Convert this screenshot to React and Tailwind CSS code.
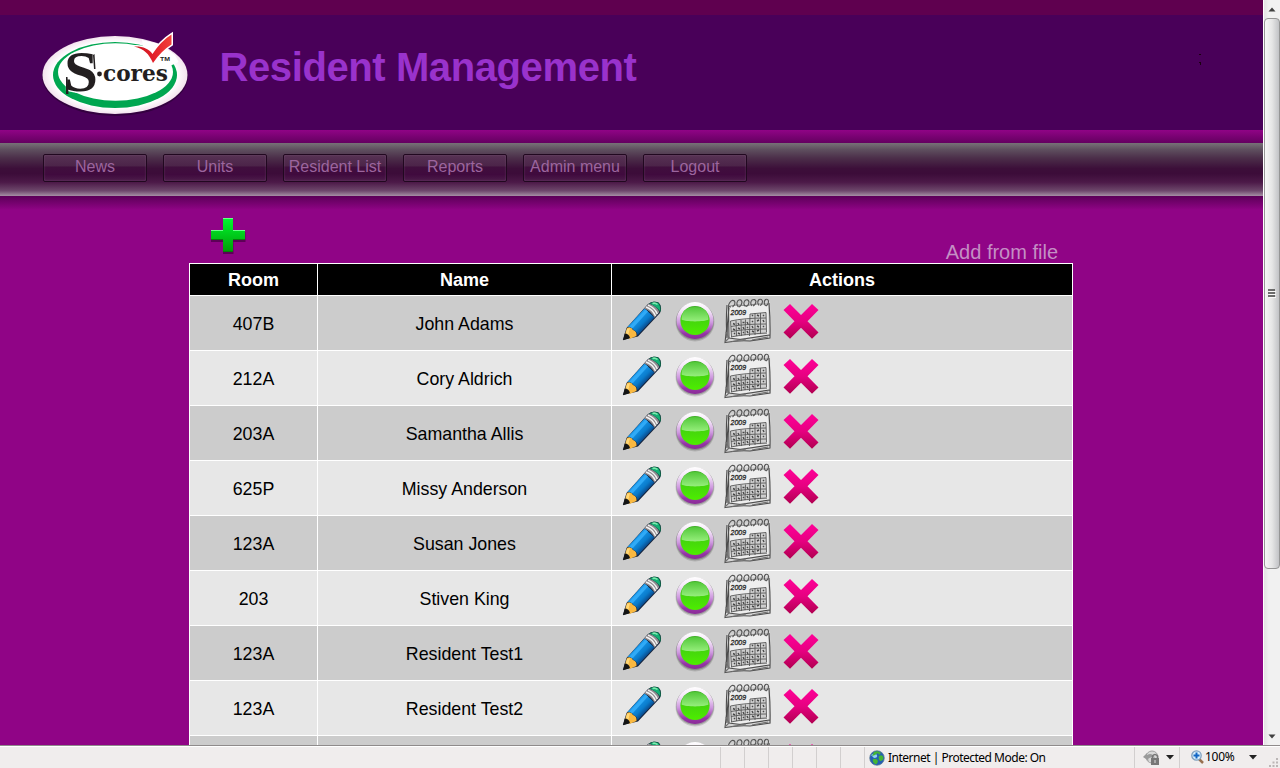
import React from "react";

const residents = [
  ["407B", "John Adams"],
  ["212A", "Cory Aldrich"],
  ["203A", "Samantha Allis"],
  ["625P", "Missy Anderson"],
  ["123A", "Susan Jones"],
  ["203", "Stiven King"],
  ["123A", "Resident Test1"],
  ["123A", "Resident Test2"],
  ["", ""],
];

const menu = ["News", "Units", "Resident List", "Reports", "Admin menu", "Logout"];

function Defs() {
  return (
    <svg width="0" height="0" className="absolute">
      <defs>
        <linearGradient id="pencilBlue" x1="0" y1="0" x2="1" y2="1">
          <stop offset="0.3" stopColor="#1b9cf0" />
          <stop offset="0.55" stopColor="#0a7ccc" />
          <stop offset="0.72" stopColor="#0a3a78" />
        </linearGradient>
        <linearGradient id="ring" x1="0" y1="0" x2="0" y2="1">
          <stop offset="0" stopColor="#ffffff" />
          <stop offset="0.25" stopColor="#f4e6f8" />
          <stop offset="0.55" stopColor="#cf9ae0" />
          <stop offset="0.85" stopColor="#9636a6" />
          <stop offset="1" stopColor="#8a2a98" />
        </linearGradient>
        <linearGradient id="ballGreen" x1="0" y1="0" x2="0" y2="1">
          <stop offset="0" stopColor="#3fae28" />
          <stop offset="0.5" stopColor="#44d60c" />
          <stop offset="1" stopColor="#4dee00" />
        </linearGradient>
        <linearGradient id="gloss" x1="0" y1="0" x2="0" y2="1">
          <stop offset="0" stopColor="#52c83a" />
          <stop offset="1" stopColor="#96ee7c" />
        </linearGradient>
        <linearGradient id="crossPink" x1="0" y1="0" x2="0" y2="1">
          <stop offset="0" stopColor="#ff0098" />
          <stop offset="0.5" stopColor="#e60080" />
          <stop offset="1" stopColor="#b00050" />
        </linearGradient>
        <linearGradient id="plusGreen" x1="0" y1="0" x2="0" y2="1">
          <stop offset="0" stopColor="#00fa30" />
          <stop offset="1" stopColor="#009c06" />
        </linearGradient>
        <linearGradient id="checkRed" x1="0" y1="0" x2="1" y2="0">
          <stop offset="0" stopColor="#c8141c" />
          <stop offset="0.5" stopColor="#e2202a" />
          <stop offset="1" stopColor="#f24038" />
        </linearGradient>
        <radialGradient id="badge">
          <stop offset="0.85" stopColor="#ffffff" />
          <stop offset="1" stopColor="#f3e3ee" />
        </radialGradient>
      </defs>
    </svg>
  );
}

function Logo() {
  return (
    <svg width="160" height="100" viewBox="36 24 160 100" className="shrink-0">
      <ellipse cx="115" cy="76.500" rx="73" ry="39.500" fill="#22002c" opacity="0.55" />
      <ellipse cx="115" cy="75" rx="72.500" ry="39" fill="url(#badge)" />
      <ellipse cx="115" cy="75" rx="62" ry="33" fill="#00a650" />
      <ellipse cx="115.500" cy="72" rx="57.500" ry="28.800" fill="#ffffff" />
      <path d="M142 40 L160 44 L175 55 L178.500 62 L170 66 L145 60Z" fill="#ffffff" />
      <path d="M134 46.500 C142 46 149 48.500 152.500 54 Q161 41 171.500 34.500 L171.500 44.500 Q161 51 153 63 C149 54 144 48.500 134 46.500Z" fill="url(#checkRed)" stroke="#ffffff" strokeWidth="3" paintOrder="stroke" />
      <text x="64" y="91" fontFamily="Liberation Serif, serif" fontWeight="bold" fontSize="56" textLength="34" lengthAdjust="spacingAndGlyphs" fill="#231f20" stroke="#ffffff" strokeWidth="2.500" paintOrder="stroke">S</text>
      <path d="M66 77 L67.500 77 L68.500 94 L66 94Z M93 55 L94.500 54 L95.500 69 L94 69Z" fill="#231f20" />
      <circle cx="99.500" cy="74" r="2.400" fill="#231f20" />
      <text x="103" y="80.500" fontFamily="DejaVu Serif, serif" fontWeight="bold" fontSize="21.500" textLength="65" lengthAdjust="spacingAndGlyphs" fill="#231f20">cores</text>
      <text x="160" y="61" fontFamily="Liberation Sans, sans-serif" fontWeight="bold" fontSize="6" textLength="10" lengthAdjust="spacingAndGlyphs" fill="#231f20">TM</text>
    </svg>
  );
}

function Pencil() {
  return (
    <svg width="40" height="42" viewBox="0 0 40 42">
      <path d="M0.800 39 L4.500 27 L26 3 Q31 -0.500 36.500 1.500 Q40.500 5 38 12 L16 35.500Z" fill="#14223a" />
      <path d="M5 27 Q9 25 11 29 Q15 30 14.500 35 L7.500 38 L2.800 34Z" fill="#f9b840" />
      <path d="M5 28 L8 27 L6 35 L3.500 34Z" fill="#ffd877" />
      <path d="M1 39.300 L2.800 32.500 Q7 32.500 8 37Z" fill="#151515" />
      <path d="M5.500 26 L22.500 7.500 L32.500 16.500 L15.500 34.500 Q15 30 11.500 29 Q10 25.500 5.500 26Z" fill="url(#pencilBlue)" />
      <path d="M7.500 25.500 L23.500 8.500 L26 10.500 L10.500 27.500Z" fill="#30aaf6" />
      <path d="M22 7.500 L27 2.500 Q35 5 37.500 11 L32.500 16.800 Q29 10 22 7.500Z" fill="#8d898d" />
      <path d="M24 6 Q31 8.500 33.500 15 M26 4.200 Q33 7 35.300 13" stroke="#f2f2f2" fill="none" strokeWidth="1.400" />
      <path d="M27.500 2.500 Q31.500 -0.200 36 1.600 Q39.500 5 38.200 10.500 Q34 5 27.500 2.500Z" fill="#14b074" />
      <path d="M27.500 2.500 Q31.500 0 36 1.600 Q39.500 5 38.200 10.500" fill="none" stroke="#0b5b40" strokeWidth="0.800" />
      <path d="M30.500 2.500 Q33 1.500 35.500 3.500" stroke="#7deaae" strokeWidth="1.600" fill="none" />
    </svg>
  );
}

function Ball() {
  return (
    <svg width="42" height="42" viewBox="0 0 42 42">
      <circle cx="21" cy="22" r="19.500" fill="#000" opacity="0.14" />
      <circle cx="21" cy="21.300" r="19" fill="#000" opacity="0.2" />
      <circle cx="21" cy="20.500" r="18.500" fill="url(#ring)" />
      <circle cx="21" cy="20.500" r="14.600" fill="url(#ballGreen)" />
      <path d="M7.500 19.500 C7.500 10 14 7 21 7 C28 7 34.500 10 34.500 19.500 C30 22 12 22 7.500 19.500Z" fill="url(#gloss)" />
    </svg>
  );
}

function Calendar({ year }) {
  return (
    <svg width="48" height="47" viewBox="0 0 48 47">
      <path d="M3 6 Q24 4 46 3 L47 41 Q24 42 3 45 Q0 30 3 6Z" fill="#d5d5d5" />
      <path d="M4.500 8 L44 5 L44.500 38 L5 41Z" fill="#eeeeee" />
      <path d="M3 7 Q2 20 2.500 31 L1 44.500 Q16 42 26 43 L46 40 Q46.500 24 45 5 M4.500 8 L5 40 L16 41.500 L45.500 37 M5 10 L3.500 25 L3 40" fill="none" stroke="#4d4d4d" strokeWidth="1.100" />
      <path d="M2 34 L5 40 L2 43 M8 43.500 L22 41 M28 42 L44 39" fill="none" stroke="#707070" strokeWidth="1.200" />
      <path d="M4 8.500 L12 7 L22 7.500 L33 6 L45 6" fill="none" stroke="#777" strokeWidth="0.900" />
      <g fill="none" stroke="#555555" strokeWidth="1.100">
        <path d="M7 9 Q3 9 5.500 5 Q8 1 10.500 3 Q12 6 8.500 9" />
        <path d="M14.500 9 Q11.500 6 14 2.500 Q17 0.500 18 4 Q17.500 8 15 9" />
        <path d="M21.500 8.500 Q18.500 6 21 2.500 Q24 0.500 25 4 Q24.500 8 22 8.500" />
        <path d="M28 8 Q25.500 5 28 2 Q31 0.500 32 3.500 Q31.500 7 29 8" />
        <path d="M35 7.500 Q32.500 4 35 1.500 Q38 0.500 38.500 3.500 Q38 7 36 7.500" />
        <path d="M41.500 8 Q39 4 41.500 1.500 Q44.500 0.500 44.500 4 Q44 7 42 8" />
      </g>
      {year && (
        <text x="6.500" y="17" fontFamily="Liberation Sans, sans-serif" fontStyle="italic" fontSize="8" textLength="15.500" lengthAdjust="spacingAndGlyphs" fill="#222" stroke="#222" strokeWidth="0.300">{year}</text>
      )}
      <path d="M26 16 L42 14.500 L43 36 L7 39 L6.500 23 L26 21Z" fill="#cfcfcf" />
      <path d="M26 16 L42 14.500 L42.500 34 M26 16 L25.500 38 M6.500 23 Q20 20 42 20 M7 28.500 Q20 26 42 26 M7 33.500 Q20 31 42 31 M7 39 Q20 36 43 35 M6.500 23 L7.500 39 M12 22.500 L12.500 38 M17 22 L17.500 38 M21.500 21.500 L21 37 M31 15 L31 37 M36.500 15 L36.500 36" fill="none" stroke="#585858" strokeWidth="0.900" />
      <path d="M9 25.500 l2 1 M14 25 l1 2 M18.500 24.500 l2 0 M23 24 l1 2 M28 18 l1 -1 M33 17 l2 1 M39 17 l1 1 M28 23 l1 1 M33 23 l2 -1 M39 22 l1 2 M9 31 l2 1 M14 30 l2 1 M19 29 l1 2 M23 29 l1 1 M28 28 l1 2 M33 28 l2 1 M39 28 l1 1 M10 36 l1 -1 M14 35 l2 1 M19 34 l1 1 M23 33 l1 2 M28 33 l2 1 M33 33 l2 -1" fill="none" stroke="#484848" strokeWidth="1.400" />
    </svg>
  );
}

function Cross() {
  return (
    <svg width="38" height="38" viewBox="0 0 38 38">
      <path d="M8 1 L19 12 L30 1 L36.500 7.100 L25.500 18.300 L36.500 29.500 L30 35.700 L19 24.700 L8 35.700 L1.500 29.500 L12.500 18.300 L1.500 7.100Z" fill="url(#crossPink)" />
    </svg>
  );
}

function Plus() {
  return (
    <svg width="38" height="38" viewBox="0 0 38 38">
      <path d="M14 3 H24 V15 H36.500 V25 H24.500 V37 H14 V25 H2 V15 H14Z" fill="#3c0038" opacity="0.6" />
      <path d="M14 1 H24 V13 H36 V23 H24 V35 H14 V23 H2 V13 H14Z" fill="url(#plusGreen)" />
      <path d="M14 1.500 H24 M2 13.500 H14 M24 13.500 H36" stroke="#6cff8a" />
      <path d="M2 22.500 H14 M24 22.500 H36 M14 34.500 H24" stroke="#087c0c" />
    </svg>
  );
}

function Scrollbar() {
  return (
    <div className="flex h-[745px] w-[17px] flex-col border-l border-white bg-gradient-to-r from-[#e3e3e3] to-[#f1f1f1] to-30%">
      <div className="flex h-[18px] items-center justify-center">
        <svg width="8" height="5" viewBox="0 0 8 5"><path d="M0.500 4.500 L4 0.500 L7.500 4.500Z" fill="#404040" /></svg>
      </div>
      <div className="flex h-[551px] items-center justify-center rounded-sm border border-[#969696] bg-gradient-to-r from-[#f7f7f7] via-[#e6e6e6] to-[#c2c3c6] pr-px">
        <svg width="8" height="9" viewBox="0 0 8 9"><path d="M0 1 H7 M0 4 H7 M0 7 H7" stroke="#444" strokeWidth="1.400" /><path d="M1 2.500 H8 M1 5.500 H8 M1 8.500 H8" stroke="#fff" strokeWidth="0.800" /></svg>
      </div>
      <div className="flex flex-1 items-end justify-center pb-[6px]">
        <svg width="8" height="5" viewBox="0 0 8 5"><path d="M0.500 0.500 L4 4.500 L7.500 0.500Z" fill="#404040" /></svg>
      </div>
    </div>
  );
}

function StatusBar() {
  return (
    <div className="flex h-[23px] border-t border-[#8f8b8b] bg-[#f0eded] text-black shadow-[inset_0_1px_0_#fff]">
      <div className="w-[720px]" />
      {[0, 1, 2, 3, 4, 5].map((i) => (
        <div key={i} className="mt-px w-6 border-l border-[#d2cfcf]" />
      ))}
      <div className="mt-px flex w-[270px] items-center border-l border-[#d2cfcf] pl-1">
        <svg width="16" height="16" viewBox="0 0 16 16">
          <circle cx="8" cy="8" r="7.300" fill="#245fb4" stroke="#5c7890" strokeWidth="0.700" />
          <path d="M2 5 Q6 2 8 5 Q9 8 5 8Z" fill="#8fd1f5" />
          <path d="M5 2 Q9 0 12 3 L10 5 L9 3 L6 5 L3 6Z M10 6 Q14 4 14.500 8 Q14 11 11 11 Q9 9 10 6Z M4 9 Q8 8 9 11 Q8 15 6 14 Q3 12 4 9Z" fill="#45b535" />
        </svg>
        <span className="ml-[3px] font-['Noto_Sans',sans-serif] text-[12px] leading-[20px] tracking-[-0.5px] whitespace-nowrap">Internet | Protected Mode: On</span>
      </div>
      <div className="mt-px flex w-[45px] items-center border-l border-[#d2cfcf] pl-2">
        <svg width="17" height="16" viewBox="0 0 17 16">
          <circle cx="9" cy="7" r="6" fill="#d8d8d8" stroke="#a2a2a2" />
          <path d="M0 7 L4 3 L4 5 Q9 2 12 8 Q8 6 5 9 L6 11Z" fill="#9a9a9a" />
          <rect x="8" y="8" width="8" height="7" fill="#777" />
          <path d="M9.500 8 V6 Q12 3 14.500 6 V8" fill="none" stroke="#777" strokeWidth="1.500" />
          <path d="M12 10 V13" stroke="#ddd" />
        </svg>
        <svg width="8" height="5" viewBox="0 0 8 5" className="ml-[6px]"><path d="M0 0 H8 L4 4.500Z" fill="#222" /></svg>
      </div>
      <div className="mt-px flex flex-1 items-center border-l border-[#d2cfcf] pl-[11px]">
        <svg width="13" height="14" viewBox="0 0 13 14" className="-mt-px shrink-0">
          <path d="M8 9 L12 13" stroke="#98704f" strokeWidth="2.500" />
          <circle cx="5.500" cy="5.500" r="4.700" fill="#d7eefc" stroke="#7fa0bd" strokeWidth="1.300" />
          <path d="M5.500 2.500 V8.500 M2.500 5.500 H8.500" stroke="#1266c4" strokeWidth="2" />
        </svg>
        <span className="-mt-px ml-[1px] w-[31px] font-['Noto_Sans',sans-serif] text-[12px] leading-[20px] tracking-[-0.3px]">100%</span>
        <svg width="8" height="5" viewBox="0 0 8 5" className="ml-[13px] shrink-0"><path d="M0 0 H8 L4 4.500Z" fill="#222" /></svg>
        <svg width="9" height="9" viewBox="0 0 9 9" className="mr-[2px] mb-px ml-auto shrink-0 self-end">
          <path d="M7 0h2v2h-2z M3.500 3.500h2v2h-2z M7 3.500h2v2h-2z M0 7h2v2h-2z M3.500 7h2v2h-2z M7 7h2v2h-2z" fill="#bbb6b6" />
        </svg>
      </div>
    </div>
  );
}

export default function App() {
  return (
    <div className="flex h-[768px] w-[1280px] flex-col overflow-hidden bg-white font-['Liberation_Sans',Arial,sans-serif]">
      <Defs />
      <div className="flex h-[745px]">
        <div className="flex h-[745px] w-[1263px] flex-col overflow-hidden bg-[#900486]">
          <div className="h-[15px] shrink-0 bg-[#5f004f]" />
          <header className="flex h-[115px] shrink-0 items-start bg-[#490059] pt-[9px] pl-9">
            <Logo />
            <h1 className="mt-[20px] ml-[23.500px] text-[40px] leading-[46px] font-bold tracking-[-0.4px] whitespace-nowrap text-[#9932cc]">Resident Management</h1>
            <svg width="4" height="14" viewBox="0 0 4 14" className="mt-[29px] mr-[60px] ml-auto"><path d="M0 1.500 H2 M0 9.500 H2 M1.500 9 V12" stroke="#1b0010" /></svg>
          </header>
          <div className="h-[13px] shrink-0 bg-gradient-to-b from-[#900486] to-[#640060]" />
          <nav className="flex h-[53px] shrink-0 gap-4 bg-[linear-gradient(#777277_0%,#5f505f_12%,#4c2f4a_28%,#3c0f39_48%,#3c0c39_58%,#4c1948_74%,#6d476b_90%,#a690a5_100%)] pt-[11px] pl-[43px]">
            {menu.map((m) => (
              <a key={m} className="flex h-7 w-[104px] justify-center rounded-[2px] border border-[#210820] bg-[linear-gradient(#573254_0%,#4c2449_42%,#400f3d_46%,#400a3e_75%,#4c1c4a_100%)] text-[16px] leading-[24px] whitespace-nowrap text-[#9c659e] shadow-[inset_0_0_2px_#94739280]">
                {m}
              </a>
            ))}
          </nav>
          <div className="h-[14px] shrink-0 bg-gradient-to-b from-[#5c0058] to-[#900486]" />
          <div className="ml-[189px] flex h-[53px] w-[884px] shrink-0 items-end justify-between pr-[15px] pl-5">
            <div className="mb-[8px]"><Plus /></div>
            <a className="-mb-px text-[20px] leading-[23px] text-[#c48fc4]">Add from file</a>
          </div>
          <div className="ml-[189px] grid w-[884px] shrink-0 grid-cols-[127px_293px_460px] gap-px bg-white p-px text-[17.800px] text-black">
            {["Room", "Name", "Actions"].map((h) => (
              <div key={h} className="flex h-[31px] items-center justify-center bg-black pt-[2px] text-[18px] font-bold text-white">{h}</div>
            ))}
            {residents.map(([room, name], i) => {
              const bg = i % 2 ? "bg-[#e7e7e7]" : "bg-[#cccccc]";
              return (
                <React.Fragment key={i}>
                  <div className={`flex h-[54px] items-center justify-center pt-[2px] ${bg}`}>{room}</div>
                  <div className={`flex h-[54px] items-center justify-center pt-[2px] ${bg}`}>{name}</div>
                  <div className={`flex h-[54px] items-start pl-[10px] ${bg}`}>
                    <div className="mt-[5px]"><Pencil /></div>
                    <div className="mt-[4px] ml-[12px]"><Ball /></div>
                    <div className="mt-[2px] ml-[8px]"><Calendar year={name ? "2009" : ""} /></div>
                    <div className="mt-[7px] ml-[10px]"><Cross /></div>
                  </div>
                </React.Fragment>
              );
            })}
          </div>
        </div>
        <Scrollbar />
      </div>
      <StatusBar />
    </div>
  );
}
